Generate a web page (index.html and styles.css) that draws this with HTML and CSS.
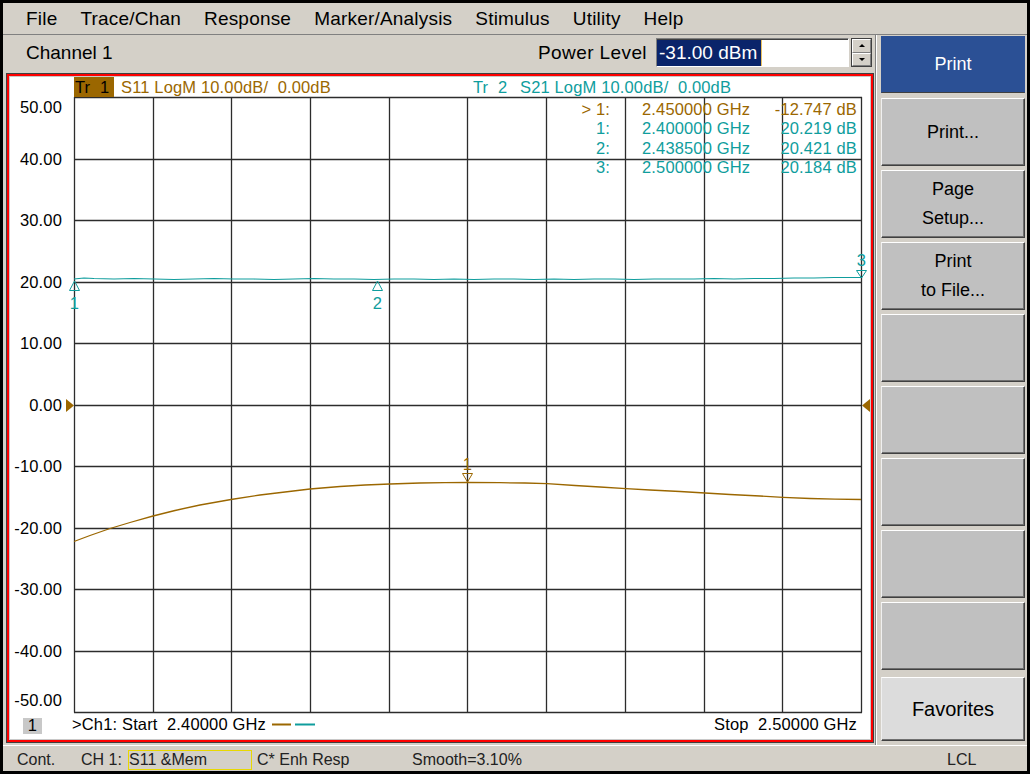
FILE: index.html
```html
<!DOCTYPE html>
<html>
<head>
<meta charset="utf-8">
<title>Network Analyzer</title>
<link rel="stylesheet" href="styles.css">
</head>
<body>
<div class="screen">
  <nav class="menubar">
    <span>File</span><span>Trace/Chan</span><span>Response</span><span>Marker/Analysis</span><span>Stimulus</span><span>Utility</span><span>Help</span>
  </nav>
  <div class="main">
    <div class="leftcol">
      <div class="chanbar">
        <span class="chan-title">Channel 1</span>
        <span class="power-label">Power Level</span>
        <div class="entry"><span class="sel">-31.00 dBm</span></div>
        <div class="spin">
          <div class="spin-btn"><i class="arrow-up"></i></div>
          <div class="spin-btn"><i class="arrow-down"></i></div>
        </div>
      </div>
      <div class="frame">
        <div class="frame-red">
          <div class="frame-in">
            <svg class="plot" viewBox="10 77 860 662" width="860" height="662" xmlns="http://www.w3.org/2000/svg">
              <!-- graticule -->
              <path class="grid" d="M74.5 97V712.5M153.5 97V712.5M231.5 97V712.5M310.5 97V712.5M389.5 97V712.5M467.5 97V712.5M546.5 97V712.5M625.5 97V712.5M704.5 97V712.5M782.5 97V712.5M861.5 97V712.5M74 97.5H862M74 159.5H862M74 220.5H862M74 282.5H862M74 343.5H862M74 405.5H862M74 466.5H862M74 528.5H862M74 589.5H862M74 651.5H862M74 712.5H862"/>

              <!-- y axis labels -->
              <g class="ylab">
                <text x="62" y="113">50.00</text>
                <text x="62" y="165">40.00</text>
                <text x="62" y="226">30.00</text>
                <text x="62" y="288">20.00</text>
                <text x="62" y="349">10.00</text>
                <text x="62" y="411">0.00</text>
                <text x="62" y="472">-10.00</text>
                <text x="62" y="534">-20.00</text>
                <text x="62" y="595">-30.00</text>
                <text x="62" y="657">-40.00</text>
                <text x="62" y="706">-50.00</text>
              </g>

              <!-- trace headers -->
              <rect x="74" y="77" width="40" height="20" class="br-fill"/>
              <text x="75" y="93" class="blk">Tr</text>
              <text x="100" y="93" class="blk">1</text>
              <text x="121" y="93" class="br" xml:space="preserve">S11 LogM 10.00dB/  0.00dB</text>
              <text x="473" y="93" class="tl">Tr</text>
              <text x="498" y="93" class="tl">2</text>
              <text x="520" y="93" class="tl" xml:space="preserve">S21 LogM 10.00dB/  0.00dB</text>

              <!-- marker table -->
              <g class="end">
                <text x="610" y="115" class="br" xml:space="preserve">&gt; 1:</text>
                <text x="610" y="134" class="tl">1:</text>
                <text x="610" y="154" class="tl">2:</text>
                <text x="610" y="173" class="tl">3:</text>
              </g>
              <text x="642" y="115" class="br">2.450000 GHz</text>
              <text x="642" y="134" class="tl">2.400000 GHz</text>
              <text x="642" y="154" class="tl">2.438500 GHz</text>
              <text x="642" y="173" class="tl">2.500000 GHz</text>
              <g class="end">
                <text x="857" y="115" class="br">-12.747 dB</text>
                <text x="857" y="134" class="tl">20.219 dB</text>
                <text x="857" y="154" class="tl">20.421 dB</text>
                <text x="857" y="173" class="tl">20.184 dB</text>
              </g>

              <!-- reference level arrows -->
              <polygon points="66,399 74,405.5 66,412" class="br-fill"/>
              <polygon points="870,399 862,405.5 870,412" class="br-fill"/>

              <!-- S21 trace -->
              <polyline class="trace-tl" points="74,279 84,278 94,278.5 114,279 134,278.5 154,279 174,279.5 194,279 214,278.5 234,279 254,279 274,279.5 294,279 314,278.5 334,279 354,279 374,279.5 394,279 414,279 434,279.5 454,279 474,279.5 494,279 514,279 534,279.5 554,279 574,279.5 594,279 614,279 634,279.5 654,279 674,279 694,279 714,278.5 734,279 754,278.5 774,278.5 794,278 814,278 834,277.5 861,277.5"/>

              <!-- S11 trace -->
              <polyline class="trace-br" points="74,541.5 90,535.5 110,528.5 130,522.5 153,516 175,510.5 200,505 231,499.5 260,495 285,492 310,489 340,486.5 365,485 390,484 420,483 445,482.6 468,482.3 500,482.7 525,483 547,483.7 575,485.5 600,487 626,488.7 650,490 680,491.5 705,493 730,494.5 760,496 783,497.3 810,498.5 835,499.2 861,499.5"/>

              <!-- markers -->
              <polygon points="74.5,281 69.5,290.5 79.5,290.5" class="mk-tl"/>
              <text x="74.5" y="309" class="tl mid">1</text>
              <polygon points="377.5,281 372.5,290.5 382.5,290.5" class="mk-tl"/>
              <text x="377.5" y="309" class="tl mid">2</text>
              <polygon points="856.5,270.5 866.5,270.5 861.5,278" class="mk-tl"/>
              <text x="861.5" y="266" class="tl mid">3</text>
              <polygon points="462.5,473.5 472.5,473.5 467.5,482" class="mk-br"/>
              <text x="467.5" y="470" class="br mid">1</text>

              <!-- bottom annotation -->
              <rect x="23" y="718" width="19" height="16" class="chip"/>
              <text x="32.5" y="731" class="blk mid">1</text>
              <text x="72" y="730" class="blk" xml:space="preserve">&gt;Ch1: Start  2.40000 GHz</text>
              <line x1="272" y1="724.5" x2="291" y2="724.5" class="sw-br"/>
              <line x1="295" y1="724.5" x2="315" y2="724.5" class="sw-tl"/>
              <text x="857" y="730" class="blk end" xml:space="preserve">Stop  2.50000 GHz</text>
            </svg>
          </div>
        </div>
      </div>
    </div>
    <aside class="softkeys">
      <div class="key key-active">Print</div>
      <div class="key">Print...</div>
      <div class="key">Page<br>Setup...</div>
      <div class="key">Print<br>to File...</div>
      <div class="key"></div>
      <div class="key"></div>
      <div class="key"></div>
      <div class="key"></div>
      <div class="key"></div>
      <div class="key key-fav">Favorites</div>
    </aside>
  </div>
  <footer class="statusbar">
    <span class="st-cont">Cont.</span>
    <span class="st-ch">CH 1:</span>
    <span class="st-meas">S11 &amp;Mem</span>
    <span class="st-cal">C* Enh Resp</span>
    <span class="st-smooth">Smooth=3.10%</span>
    <span class="st-lcl">LCL</span>
  </footer>
</div>
</body>
</html>
```

FILE: styles.css
```css
* { box-sizing: border-box; }
html, body { margin: 0; padding: 0; background: #000; }
body { padding: 3px; width: 1030px; height: 774px; overflow: hidden; }

.screen {
  width: 1024px;
  height: 768px;
  background: #d4d0c8;
  display: flex;
  flex-direction: column;
  font-family: "Liberation Sans", Arial, sans-serif;
  color: #000;
}

/* menu */
.menubar {
  height: 32px;
  flex: none;
  display: flex;
  align-items: center;
  gap: 23px;
  padding-left: 23px;
  font-size: 19px;
  letter-spacing: 0.2px;
  border-bottom: 1px solid #808080;
}

.main { flex: none; height: 710px; display: flex; }
.leftcol { width: 872px; display: flex; flex-direction: column; }

/* channel bar */
.chanbar {
  height: 35px;
  flex: none;
  display: flex;
  align-items: center;
  padding: 0 3px 0 23px;
  font-size: 19px;
}
.power-label { margin-left: auto; letter-spacing: 0.4px; }
.entry {
  width: 193px;
  height: 29px;
  margin-left: 9px;
  background: #fff;
  border: 1px solid;
  border-color: #808080 #fff #fff #808080;
  box-shadow: inset 1px 1px 0 #404040;
  display: flex;
  align-items: center;
}
.sel {
  background: #0a246a;
  color: #fff;
  height: 26px;
  line-height: 26px;
  padding: 0 4px 0 2px;
  border-right: 1px solid #e8c060;
}
.spin {
  margin-left: 2px;
  width: 21px;
  height: 29px;
  display: flex;
  flex-direction: column;
  border: 1px solid #404040;
}
.spin-btn {
  flex: 1;
  background: #d4d0c8;
  border: 1px solid;
  border-color: #fff #808080 #808080 #fff;
  display: flex;
  align-items: center;
  justify-content: center;
}
.arrow-up, .arrow-down { width: 0; height: 0; border-left: 3px solid transparent; border-right: 3px solid transparent; }
.arrow-up { border-bottom: 3px solid #000; }
.arrow-down { border-top: 3px solid #000; }

/* chart frame */
.frame {
  margin: 3px 0 0 3px;
  width: 868px;
  height: 670px;
  border: 1px solid #404040;
}
.frame-red { height: 100%; border: 2px solid #ff0000; }
.frame-in { height: 100%; border: 1px solid #c8c8c8; background: #fff; }
.plot { display: block; width: 860px; height: 662px; }
.plot text { font-family: "Liberation Sans", Arial, sans-serif; font-size: 16.5px; letter-spacing: 0.15px; }
.grid { fill: none; stroke: #2c2c2c; stroke-width: 1.3; }
.ylab text { text-anchor: end; fill: #000; }
.end text, text.end { text-anchor: end; }
text.mid { text-anchor: middle; }
.blk { fill: #000; }
.br { fill: #9b6700; }
.tl { fill: #0f9d9d; }
.br-fill { fill: #9b6700; }
.chip { fill: #c8c8c8; }
.trace-tl { fill: none; stroke: #0f9d9d; stroke-width: 1.2; }
.trace-br { fill: none; stroke: #9b6700; stroke-width: 1.3; }
.mk-tl { fill: none; stroke: #0f9d9d; stroke-width: 1; }
.mk-br { fill: none; stroke: #9b6700; stroke-width: 1; }
.sw-br { stroke: #9b6700; stroke-width: 2; }
.sw-tl { stroke: #0f9d9d; stroke-width: 2; }

/* softkeys */
.softkeys {
  width: 152px;
  display: flex;
  flex-direction: column;
  gap: 4px;
  padding: 1px 2px 0 5px;
  border-left: 1px solid #808080;
  box-shadow: inset 1px 0 0 #fff;
}
.key {
  height: 68px;
  flex: none;
  background: #c0c0c0;
  border: 1px solid;
  border-color: #fff #404040 #404040 #f0f0f0;
  box-shadow: inset -1px -1px 0 #707070;
  display: flex;
  align-items: center;
  justify-content: center;
  text-align: center;
  font-size: 18px;
  line-height: 29px;
}
.key-active {
  height: 57px;
  margin-bottom: 1px;
  background: #2b5095;
  color: #fff;
  border-color: #2b5095 #2b5095 #404040 #2b5095;
  box-shadow: none;
}
.key-fav { height: 64px; margin-top: 3px; background: #dcdcdc; font-size: 20px; }

/* status bar */
.statusbar {
  flex: none;
  height: 26px;
  display: flex;
  align-items: center;
  padding-top: 3px;
  border-top: 1px solid #fff;
  font-size: 16px;
  color: #222;
}
.statusbar span { flex: none; white-space: pre; }
.st-cont { width: 78px; padding-left: 14px; }
.st-ch { width: 47px; }
.st-meas { width: 124px; height: 20px; line-height: 18px; border: 1px solid #e8d800; margin-right: 5px; }
.st-cal { width: 155px; }
.st-smooth { width: 535px; }
.st-lcl { width: 60px; }
```
